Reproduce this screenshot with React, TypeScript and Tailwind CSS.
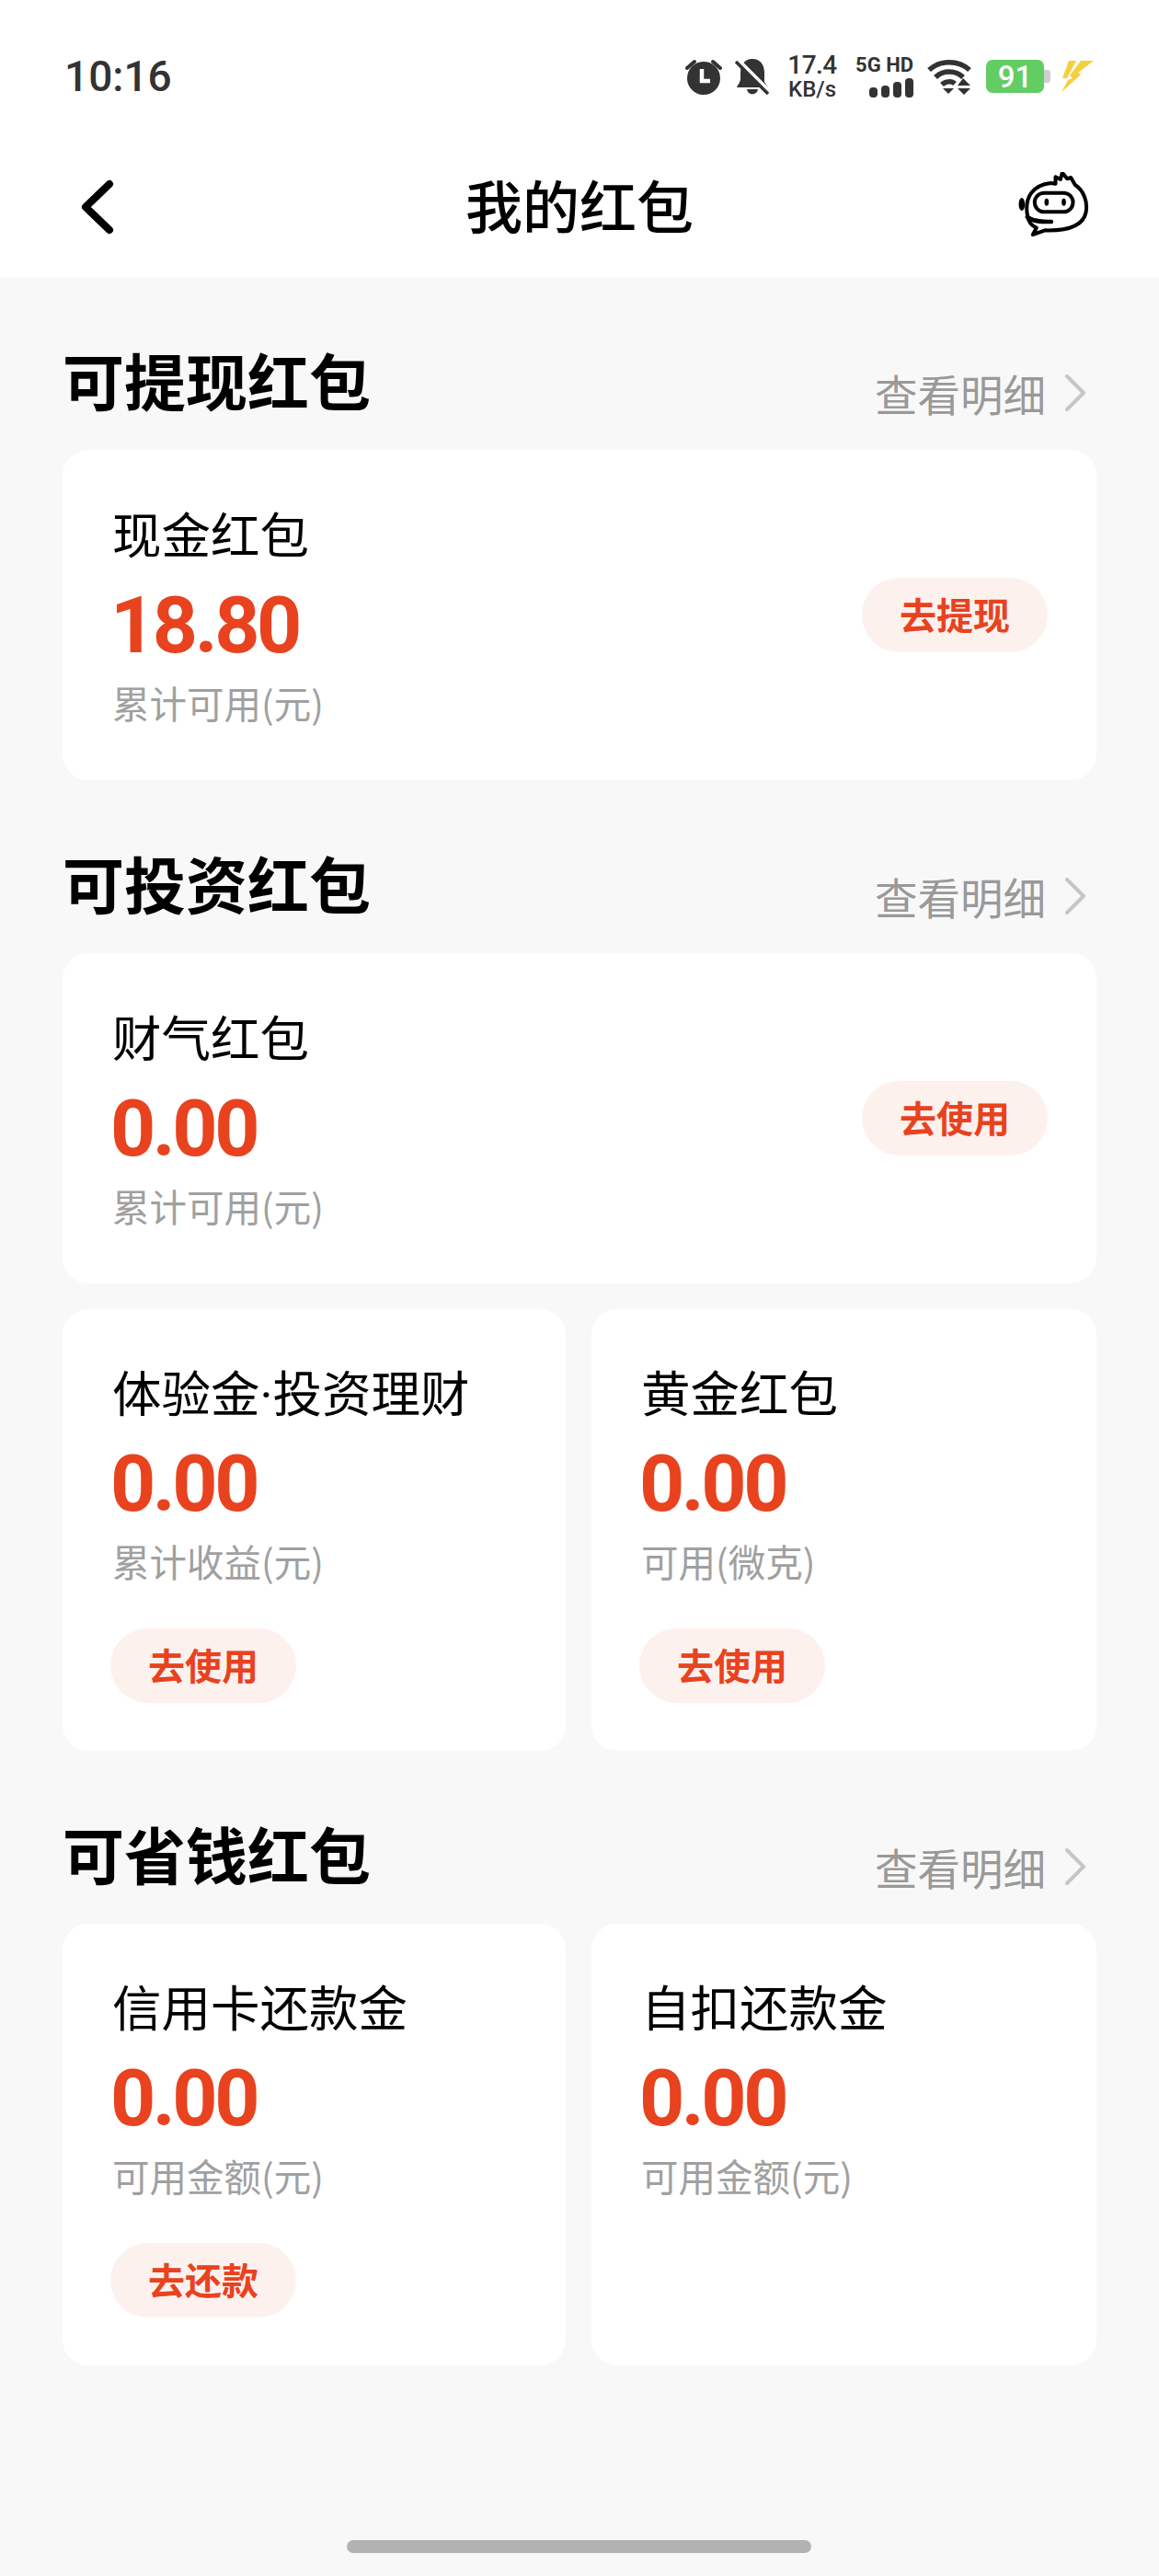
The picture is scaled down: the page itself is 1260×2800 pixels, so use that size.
import React from "react";

const cjk = "font-['Noto_Sans_CJK_SC','Noto_Sans',sans-serif]";

const StatusIcons = () => (
  <div className="flex items-center font-['Roboto',sans-serif] text-[#333333]">
    {/* alarm */}
    <svg width="40" height="40" viewBox="0 0 40 40" className="mr-[14px]">
      <circle cx="20" cy="22" r="18" fill="#333333" />
      <path d="M2 11 L10 4 M38 11 L30 4" stroke="#333333" strokeWidth="4" strokeLinecap="round" />
      <path d="M18 12 V25 H27" stroke="#fff" strokeWidth="4.5" fill="none" />
    </svg>
    {/* muted bell */}
    <svg width="38" height="40" viewBox="0 0 38 40" className="mr-[17px]">
      <path d="M19 1 C28 1 32 8 32 16 V26 L36 32 H2 C3 29 6 27 6 22 V16 C6 8 10 1 19 1 Z M13 34 H25 C24 41 14 41 13 34 Z" fill="#333333" />
      <path d="M1 1 L37 37" stroke="#ffffff" strokeWidth="6" />
      <path d="M1 4 L36 39" stroke="#333333" strokeWidth="3.5" />
    </svg>
    <div className="flex flex-col items-center mr-[17px] w-[58px]">
      <span className="text-[28px] leading-[28px] font-medium tracking-[-0.5px]">17.4</span>
      <span className="text-[24px] leading-[24px] font-medium">KB/s</span>
    </div>
    <div className="flex flex-col items-end mr-[15px] w-[64px]">
      <span className="text-[22px] leading-[22px] font-bold whitespace-nowrap">5G HD</span>
      <svg width="48" height="21" viewBox="0 0 48 21" className="mt-[3px]">
        <rect x="0" y="10" width="9" height="11" rx="4" fill="#333333" />
        <rect x="13" y="8" width="9" height="13" rx="4" fill="#333333" />
        <rect x="26" y="4" width="9" height="17" rx="4" fill="#333333" />
        <rect x="39" y="0" width="9" height="21" rx="4" fill="#333333" />
      </svg>
    </div>
    {/* wifi */}
    <svg width="48" height="40" viewBox="0 0 48 40" className="mr-[16px]">
      <path d="M2 13 C14 2 34 2 46 13" stroke="#333333" strokeWidth="5.5" fill="none" />
      <path d="M9 21 C17 13 31 13 39 21" stroke="#333333" strokeWidth="5.5" fill="none" />
      <path d="M16 29 C20 25 27 25 30 28" stroke="#333333" strokeWidth="5.5" fill="none" />
      <path d="M17 33 H29 L23 39 Z" fill="#333333" />
      <path d="M39 22 L47 30 H33 Z M33 33 H47 L40 40 Z" fill="#333333" />
    </svg>
    {/* battery */}
    <div className="flex items-center mr-[12px]">
      <div className="w-[63px] h-[36px] rounded-[7px] bg-[#62cd62] flex items-center justify-center text-white text-[33px] font-medium leading-none">
        91
      </div>
      <div className="w-[7px] h-[14px] rounded-r-[3px] bg-[#cfcfcf]" />
    </div>
    <svg width="36" height="36" viewBox="0 0 36 36">
      <path d="M8 1 H16 L6 20 L1 20 Z" fill="#f5cf3c" />
      <path d="M21 1 H35 L18 14 L21 16 L0 35 L7 22 L12 20 L9 17 Z" fill="#f5cf3c" />
    </svg>
  </div>
);

const Robot = () => (
  <svg width="77" height="70" viewBox="85 50 230 210" fill="none" stroke="#000000" className="mb-[7px]">
    <path
      d="M115 195 C102 130 135 92 190 86 L206 88 L206 66 L222 74 L228 52 L244 72 L256 68 L270 92 C298 110 312 148 305 182 C296 226 250 242 172 240 L132 254 L144 232 C126 224 118 212 115 195 Z"
      strokeWidth="12"
      strokeLinejoin="round"
    />
    <rect x="138" y="118" width="125" height="62" rx="31" strokeWidth="12" />
    <ellipse cx="177" cy="148" rx="7" ry="12" fill="#000000" stroke="none" />
    <ellipse cx="233" cy="148" rx="7" ry="12" fill="#000000" stroke="none" />
    <ellipse cx="96" cy="155" rx="10" ry="21" fill="#000000" stroke="none" />
    <path d="M114 196 C130 210 155 212 192 212" strokeWidth="14" strokeLinecap="round" />
  </svg>
);

const SectionHeader = ({ title, first }: { title: string; first?: boolean }) => (
  <div className={`flex justify-between mb-[37px] h-[80px] ${first ? "mt-[70px]" : "mt-[71px]"}`}>
    <h2 className="text-[67px] leading-[80px] font-bold text-black">{title}</h2>
    <div className="flex items-center pt-[30px] pr-[11px]">
      <span className="text-[46.5px] leading-[50px] text-[#999999]">查看明细</span>
      <svg width="24" height="40" viewBox="0 0 24 40" fill="none" className="ml-[20px]">
        <path d="M3 2 L21 20 L3 38" stroke="#c6c6c6" strokeWidth="4" strokeLinecap="round" strokeLinejoin="round" />
      </svg>
    </div>
  </div>
);

const Pill = ({ label }: { label: string }) => (
  <div className="w-[202px] h-[81px] rounded-full bg-[#fdf1ee] flex items-center justify-center pb-[4px] text-[40px] font-bold text-[#e8421f]">
    {label}
  </div>
);

const CardText = ({ name, amount, sub }: { name: string; amount: string; sub: string }) => (
  <div>
    <div className="text-[53.5px] leading-[64px] text-black whitespace-nowrap font-['Roboto','Noto_Sans_CJK_SC',sans-serif]">
      {name}
    </div>
    <div className="mt-[16px] -ml-[2px] h-[96px] text-[86px] leading-[96px] font-bold text-[#e8421f] tracking-[-3.5px] font-['Roboto',sans-serif]">
      {amount}
    </div>
    <div className="mt-[8px] text-[40.5px] leading-[56px] text-[#a0a0a0]">{sub}</div>
  </div>
);

const WideCard = ({ name, amount, sub, action }: { name: string; amount: string; sub: string; action: string }) => (
  <div className="bg-white rounded-[28px] h-[359px] pl-[54px] pr-[53px] pt-[63px] flex justify-between">
    <CardText name={name} amount={amount} sub={sub} />
    <div className="mt-[76px]">
      <Pill label={action} />
    </div>
  </div>
);

const HalfCard = ({ name, amount, sub, action }: { name: string; amount: string; sub: string; action?: string }) => (
  <div className="bg-white rounded-[28px] h-[480px] pl-[54px] pt-[62px]">
    <CardText name={name} amount={amount} sub={sub} />
    {action && (
      <div className="mt-[45px] -ml-[2px]">
        <Pill label={action} />
      </div>
    )}
  </div>
);

export default function App() {
  return (
    <div className={`w-[1260px] h-[2800px] bg-[#f8f8f8] relative overflow-hidden ${cjk}`}>
      <div className="bg-white h-[302px]">
        <div className="h-[148px] pt-[18px] pl-[70px] pr-[70px] flex items-center justify-between">
          <span className="text-[46px] font-medium text-[#333333] font-['Roboto',sans-serif]">10:16</span>
          <StatusIcons />
        </div>
        <div className="h-[154px] pl-[84px] pr-[76px] flex items-center justify-between relative">
          <svg width="42" height="60" viewBox="0 0 42 60" fill="none">
            <path d="M35 5 L9 30 L35 55" stroke="#000000" strokeWidth="8" strokeLinecap="round" strokeLinejoin="round" />
          </svg>
          <h1 className="absolute left-0 right-0 top-[34px] text-center text-[62px] leading-[80px] font-medium text-black">
            我的红包
          </h1>
          <Robot />
        </div>
      </div>

      <div className="px-[68px]">
        <SectionHeader first title="可提现红包" />
        <WideCard name="现金红包" amount="18.80" sub="累计可用(元)" action="去提现" />

        <SectionHeader title="可投资红包" />
        <WideCard name="财气红包" amount="0.00" sub="累计可用(元)" action="去使用" />
        <div className="grid grid-cols-[547px_549px] gap-[28px] mt-[28px]">
          <HalfCard name="体验金·投资理财" amount="0.00" sub="累计收益(元)" action="去使用" />
          <HalfCard name="黄金红包" amount="0.00" sub="可用(微克)" action="去使用" />
        </div>

        <SectionHeader title="可省钱红包" />
        <div className="grid grid-cols-[547px_549px] gap-[28px]">
          <HalfCard name="信用卡还款金" amount="0.00" sub="可用金额(元)" action="去还款" />
          <HalfCard name="自扣还款金" amount="0.00" sub="可用金额(元)" />
        </div>
      </div>

      <div className="absolute left-[377px] top-[2761px] w-[505px] h-[14px] rounded-full bg-[#b2b2b2]" />
    </div>
  );
}
